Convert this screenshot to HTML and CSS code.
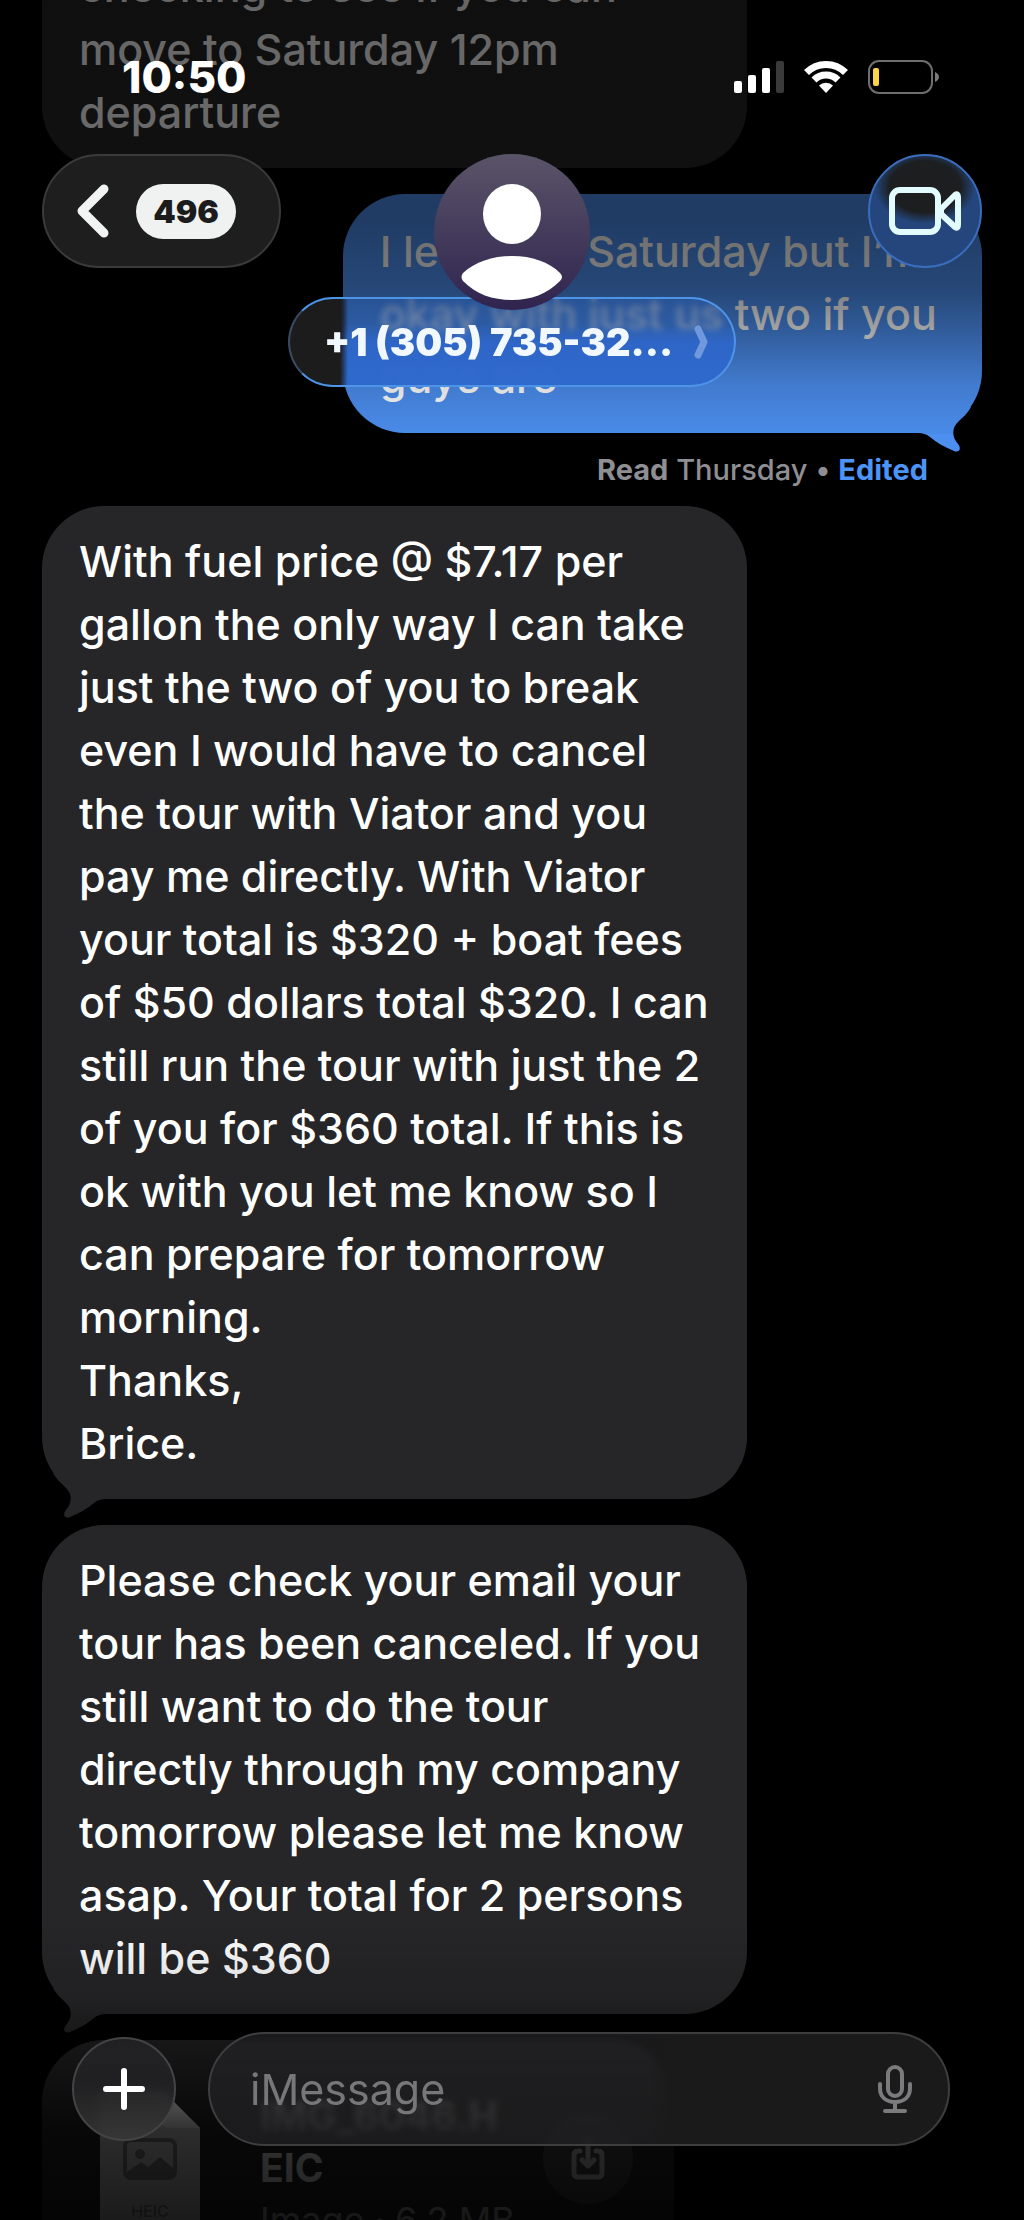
FILE: index.html
```
<!DOCTYPE html>
<html lang="en">
<head>
    <meta charset="UTF-8">
    <meta name="viewport" content="width=device-width, initial-scale=1.0">
    <title>Messages</title>
    <link rel="stylesheet" href="styles.css">
</head>
<body>

    <div class="screen">

        <!-- Conversation -->
        <main class="thread">
            <div class="bubble received">checking to see if you can<br>move to Saturday 12pm<br>departure</div>

            <div class="sent-group">
                <div class="bubble sent">I leave on Saturday but I’m<br>okay with just us two if you<br>guys are
                    <svg class="tail" viewBox="0 0 60 46" aria-hidden="true"><path d="M7 0C11 7 15 10 19 14C27 21 26 30 20 37C16 42 19 46 24 44C34 40 42 35 48 30C52 27 55 26 60 26V0Z"/></svg>
                </div>
                <p class="receipt"><b>Read</b> Thursday • <a href="#">Edited</a></p>
            </div>

            <div class="bubble received">With fuel price @ $7.17 per<br>gallon the only way I can take<br>just the two of you to break<br>even I would have to cancel<br>the tour with Viator and you<br>pay me directly. With Viator<br>your total is $320 + boat fees<br>of $50 dollars total $320. I can<br>still run the tour with just the 2<br>of you for $360 total. If this is<br>ok with you let me know so I<br>can prepare for tomorrow<br>morning.<br>Thanks,<br>Brice.
                <svg class="tail" viewBox="0 0 60 46" aria-hidden="true"><path d="M7 0C11 7 15 10 19 14C27 21 26 30 20 37C16 42 19 46 24 44C34 40 42 35 48 30C52 27 55 26 60 26V0Z"/></svg>
            </div>

            <div class="bubble received">Please check your email your<br>tour has been canceled. If you<br>still want to do the tour<br>directly through my company<br>tomorrow please let me know<br>asap. Your total for 2 persons<br>will be $360
                <svg class="tail" viewBox="0 0 60 46" aria-hidden="true"><path d="M7 0C11 7 15 10 19 14C27 21 26 30 20 37C16 42 19 46 24 44C34 40 42 35 48 30C52 27 55 26 60 26V0Z"/></svg>
            </div>

            <div class="bubble attachment">
                <div class="file-icon">
                    <svg viewBox="0 0 100 140" width="100" height="140" aria-hidden="true">
                        <path d="M8 0H62L100 38V140H0V8Q0 0 8 0Z" fill="#dcdcdc"/>
                        <path d="M62 0L100 38H70Q62 38 62 30Z" fill="#f4f4f4"/>
                        <rect x="25" y="50" width="50" height="38" rx="6" fill="none" stroke="#8a8a8a" stroke-width="4"/>
                        <circle cx="40" cy="64" r="5" fill="#8a8a8a"/>
                        <path d="M27 82L41 72L48 77L60 67L74 79V86H27Z" fill="#8a8a8a"/>
                    </svg>
                    <span class="file-type">HEIC</span>
                </div>
                <div class="file-text">
                    <div class="file-name">IMG_6046.H<br>EIC</div>
                    <div class="file-size">Image · 6.2 MB</div>
                </div>
                <button class="download" aria-label="Download">
                    <svg viewBox="0 0 34 44" width="34" height="44" fill="none" stroke="#d0d0d0" stroke-width="5" stroke-linecap="round" stroke-linejoin="round" aria-hidden="true">
                        <path d="M9 14H7Q3 14 3 18V36Q3 40 7 40H27Q31 40 31 36V18Q31 14 27 14H25"/>
                        <path d="M17 3V28M11 23L17 29L23 23"/>
                    </svg>
                </button>
            </div>
        </main>

        <!-- Status bar and contact -->
        <header class="top">
            <div class="status-bar">
                <span class="time">10:50</span>
                <div class="status-icons">
                    <svg viewBox="0 0 50 34" width="50" height="34" aria-hidden="true">
                        <rect x="0" y="21" width="8" height="12" rx="2" fill="#fff"/>
                        <rect x="14" y="15" width="8" height="18" rx="2" fill="#fff"/>
                        <rect x="28" y="8" width="8" height="25" rx="2" fill="#fff"/>
                        <rect x="42" y="1" width="8" height="32" rx="2" fill="#3a3a3a"/>
                    </svg>
                    <svg viewBox="0 0 44 34" width="44" height="34" aria-hidden="true">
                        <g fill="none" stroke="#fff" stroke-width="7">
                            <path d="M2.500 12.500A27.500 27.500 0 0 1 41.500 12.500"/>
                            <path d="M10 20A17 17 0 0 1 34 20"/>
                        </g>
                        <path d="M15 25.500A10 10 0 0 1 29 25.500L22 33Z" fill="#fff"/>
                    </svg>
                    <svg viewBox="0 0 72 34" width="72" height="34" aria-hidden="true">
                        <rect x="1" y="1" width="63" height="32" rx="10" fill="none" stroke="#6e6e6e" stroke-width="2"/>
                        <rect x="5" y="8" width="6" height="18" rx="2" fill="#f8d347"/>
                        <path d="M67 12Q71 14 71 17Q71 20 67 22Z" fill="#7a7a7a"/>
                    </svg>
                </div>
            </div>

            <nav class="nav">
                <button class="glass back" aria-label="Back, 496 unread">
                    <svg viewBox="0 0 34 54" width="34" height="54" aria-hidden="true"><path d="M28 5L6 27L28 49" fill="none" stroke="#f2f3f3" stroke-width="9" stroke-linecap="round" stroke-linejoin="round"/></svg>
                    <span class="unread">496</span>
                </button>

                <div class="contact">
                    <svg class="avatar" viewBox="0 0 156 156" width="156" height="156" aria-hidden="true">
                        <defs>
                            <linearGradient id="avatarFill" x1="0" y1="0" x2="0" y2="1">
                                <stop offset="0" stop-color="#5a5468"/>
                                <stop offset="1" stop-color="#302450"/>
                            </linearGradient>
                        </defs>
                        <circle cx="78" cy="78" r="78" fill="url(#avatarFill)"/>
                        <ellipse cx="78" cy="60" rx="29" ry="30" fill="#fff"/>
                        <path d="M29 119C41 108 58 102 78 102C98 102 115 108 126 119Q130 123 126 127C113 140 97 146 78 146C58 146 42 140 29 127Q26 123 29 119Z" fill="#fff"/>
                    </svg>
                    <button class="glass contact-name">
                        <span>+1 (305) 735-32...</span>
                        <svg viewBox="0 0 14 34" width="14" height="34" aria-hidden="true"><path d="M4 4L10 17L4 30" fill="none" stroke="#7098dc" stroke-width="7" stroke-linecap="round" stroke-linejoin="round"/></svg>
                    </button>
                </div>

                <button class="glass video" aria-label="FaceTime">
                    <svg viewBox="0 0 72 50" width="72" height="50" fill="none" stroke="#e2fbff" stroke-width="6" stroke-linejoin="round" aria-hidden="true">
                        <rect x="3" y="4" width="46" height="42" rx="8"/>
                        <path d="M52 23L66 9Q69 7 69 11V39Q69 43 66 41L52 28Z"/>
                    </svg>
                </button>
            </nav>
        </header>

        <!-- Message box -->
        <form class="composer">
            <button type="button" class="add" aria-label="Add">
                <svg viewBox="0 0 42 42" width="42" height="42" aria-hidden="true"><path d="M21 3V39M3 21H39" stroke="#fff" stroke-width="6" stroke-linecap="round"/></svg>
            </button>
            <div class="field">
                <input type="text" placeholder="iMessage" aria-label="iMessage">
                <button type="button" class="mic" aria-label="Dictate">
                    <svg viewBox="0 0 34 50" width="34" height="50" fill="none" stroke="#7b7b7d" stroke-width="4" stroke-linecap="round" aria-hidden="true">
                        <rect x="10" y="3" width="14" height="29" rx="7"/>
                        <path d="M2 20V24C2 33 8 38 17 38C26 38 32 33 32 24V20M17 38V47M7 47H27"/>
                    </svg>
                </button>
            </div>
        </form>

    </div>

</body>
</html>
```
FILE: styles.css
```
* {
    box-sizing: border-box;
}
body {
    margin: 0;
    background-color: #000;
    font-family: Inter, "Liberation Sans", sans-serif;
}
button {
    margin: 0;
    padding: 0;
    border: none;
    background: none;
    font-family: inherit;
}
svg {
    display: block;
    flex-shrink: 0;
}
.screen {
    position: relative;
    height: 100vh;
    overflow: hidden;
}

/* Conversation */
.thread {
    display: flex;
    flex-direction: column;
    gap: 26px;
    margin-top: -69px;
    padding: 0 42px;
}
.bubble {
    position: relative;
    padding: 24px 37px;
    border-radius: 62px;
    font-size: 43px;
    font-weight: 500;
    line-height: 63px;
    white-space: nowrap;
    color: #fff;
}
.received {
    align-self: flex-start;
    width: 75%;
    background-color: #262628;
    fill: #262628;
}
.sent-group {
    display: flex;
    flex-direction: column;
    align-items: flex-end;
}
.sent {
    width: 68%;
    padding-top: 26px;
    background-color: #4c8ff0;
    fill: #4c8ff0;
}
.tail {
    position: absolute;
    left: 4px;
    bottom: -20px;
    width: 60px;
    height: 46px;
}
.sent .tail {
    left: auto;
    right: 4px;
    transform: scaleX(-1);
}
.receipt {
    margin: 0;
    padding: 17px 54px 0 0;
    font-size: 29px;
    font-weight: 500;
    line-height: 40px;
    height: 47px;
    color: #8e8e93;
}
.receipt b,
.receipt a {
    font-weight: 700;
}
.receipt a {
    color: #4c94f8;
    text-decoration: none;
}

/* Attached file */
.attachment {
    display: flex;
    align-self: flex-start;
    gap: 60px;
    width: 632px;
    padding: 50px 40px 40px 58px;
    background-color: #262628;
}
.file-icon {
    position: relative;
}
.file-type {
    position: absolute;
    top: 112px;
    left: 0;
    right: 0;
    text-align: center;
    font-size: 16px;
    line-height: 18px;
    color: #8a8a8a;
}
.file-text {
    width: 240px;
    line-height: 52px;
}
.file-name {
    font-size: 39px;
    font-weight: 700;
}
.file-size {
    font-size: 36px;
    font-weight: 400;
    color: #c0c0c4;
}
.download {
    display: flex;
    align-items: center;
    justify-content: center;
    width: 90px;
    height: 90px;
    margin-top: 24px;
    margin-left: -17px;
    border-radius: 50%;
    background-color: #48484a;
}

/* Status bar and contact, over the conversation */
.top {
    position: absolute;
    top: 0;
    left: 0;
    right: 0;
    height: 434px;
    background: linear-gradient(rgba(0, 0, 0, 0.6) 0, rgba(0, 0, 0, 0.58) 220px, rgba(0, 0, 0, 0.5) 290px, rgba(0, 0, 0, 0.36) 330px, rgba(0, 0, 0, 0.14) 385px, rgba(0, 0, 0, 0.03) 434px);
}
.status-bar {
    display: flex;
    align-items: center;
    justify-content: space-between;
    height: 154px;
    padding: 0 84px 0 122px;
}
.time {
    font-size: 44px;
    font-weight: 800;
    color: #fff;
}
.status-icons {
    display: flex;
    gap: 20px;
}
.nav {
    display: grid;
    grid-template-columns: 1fr auto 1fr;
    align-items: start;
    padding: 0 42px;
}
.glass {
    display: flex;
    align-items: center;
    height: 114px;
    border: 2px solid #3a3a3c;
    border-radius: 57px;
    background-color: #1e1e1e;
}
.back {
    justify-self: start;
    gap: 26px;
    padding: 0 43px 0 32px;
}
.unread {
    min-width: 100px;
    border-radius: 28px;
    background-color: #f0f2f2;
    font-size: 32px;
    font-weight: 900;
    line-height: 55px;
    text-align: center;
    color: #1c1c1c;
}
.contact {
    display: flex;
    flex-direction: column;
    align-items: center;
}
.avatar {
    position: relative;
    z-index: 1;
}
.contact-name {
    justify-content: space-between;
    min-width: 448px;
    height: 90px;
    margin-top: -13px;
    padding: 0 26px 0 34px;
    border-color: #4d93e8;
    border-left-color: #3a4a60;
    border-radius: 45px;
    background: linear-gradient(90deg, #1c1c1d 50px, rgba(28, 28, 29, 0) 58px), linear-gradient(rgba(42, 96, 184, 0.4) 30%, rgba(46, 102, 202, 0.9) 50%, #2f69cc);
    backdrop-filter: blur(3px);
    font-size: 38px;
    font-weight: 900;
    color: #f2f8ff;
}
.video {
    justify-self: end;
    justify-content: center;
    width: 114px;
    border-color: #3a6dbd;
    background: radial-gradient(ellipse 44px 32px at 50% 28%, #1c1e20 80%, #24467c 115%);
}

/* Message box, over the end of the conversation */
.composer {
    position: absolute;
    left: 0;
    right: 0;
    bottom: 0;
    display: flex;
    align-items: center;
    gap: 32px;
    padding: 112px 74px 74px 72px;
    background: linear-gradient(rgba(0, 0, 0, 0), rgba(0, 0, 0, 0.15) 80px, rgba(0, 0, 0, 0.4) 120px, rgba(0, 0, 0, 0.8) 210px, rgba(0, 0, 0, 0.88));
}
.add {
    display: flex;
    flex-shrink: 0;
    align-items: center;
    justify-content: center;
    width: 104px;
    height: 104px;
    border: 2px solid #444446;
    border-radius: 50%;
    background: linear-gradient(rgba(34, 34, 36, 0.95) 45%, rgba(56, 56, 56, 0.9));
    backdrop-filter: blur(3px);
}
.field {
    flex: 1;
    min-width: 0;
    display: flex;
    align-items: center;
    height: 114px;
    padding: 0 36px 0 40px;
    border: 2px solid #3e3e40;
    border-radius: 57px;
    background: linear-gradient(90deg, rgba(36, 36, 38, 0.7) 440px, #1a1a1a 465px);
    backdrop-filter: blur(3px);
}
.field input {
    flex: 1;
    min-width: 0;
    padding: 0;
    border: none;
    outline: none;
    background: none;
    font-family: inherit;
    font-size: 43px;
    color: #fff;
}
.field input::placeholder {
    color: #77777a;
    opacity: 1;
}
```
